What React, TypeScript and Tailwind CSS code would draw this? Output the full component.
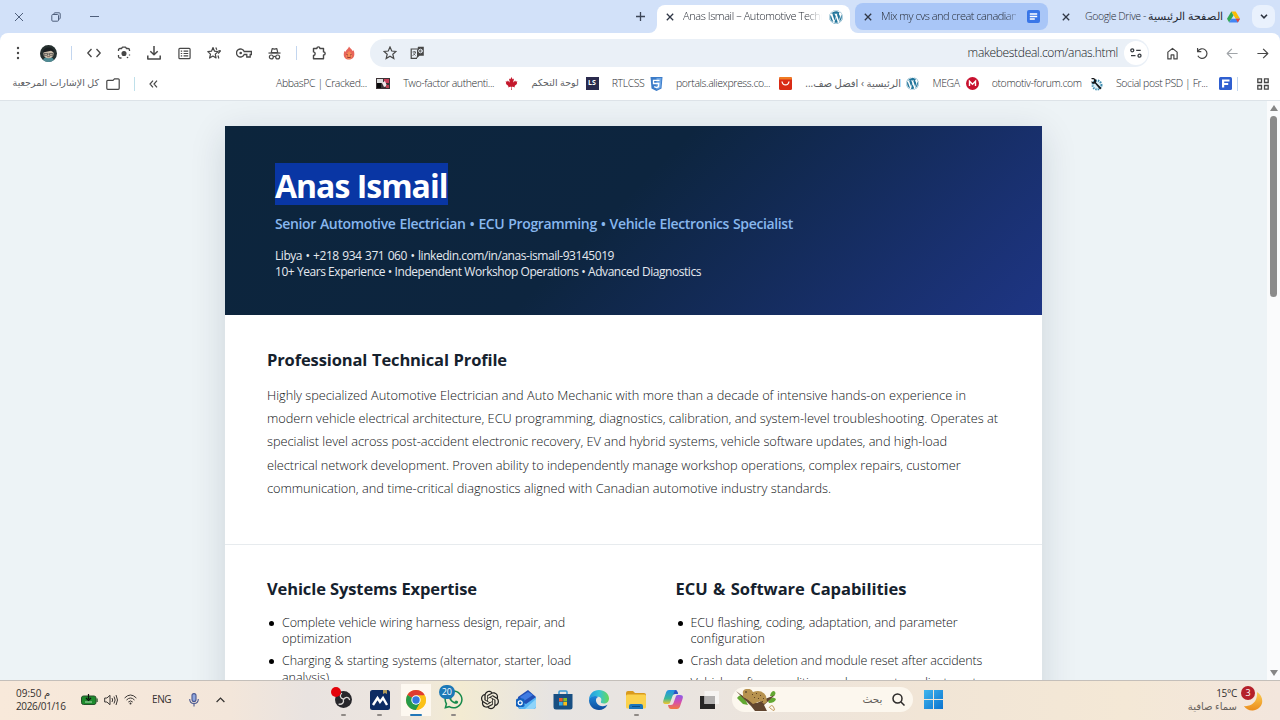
import type { ReactNode } from "react";
import { FaCanadianMapleLeaf, FaWhatsapp, FaWordpress } from "react-icons/fa";
import { RiOpenaiFill } from "react-icons/ri";

const Line = ({ className, children }: { className: string; children: ReactNode }) => (
  <span className={`block whitespace-nowrap [text-align-last:justify] ${className}`}>{children}</span>
);

const Close = ({ className = "" }: { className?: string }) => (
  <svg className={className} width="8" height="8" viewBox="0 0 8 8" fill="none" stroke="#303746" strokeWidth="1.3">
    <path d="M.8.8l6.4 6.4M7.2.8L.8 7.2" />
  </svg>
);

const Drive = () => (
  <svg width="13" height="12" viewBox="0 0 24 22">
    <path d="M8 1h8l8 13h-8z" fill="#fbbc04" />
    <path d="M8 1l4 7-8 13-4-7z" fill="#34a853" />
    <path d="M4 21l4-7h16l-4 7z" fill="#4285f4" />
    <path d="M16 14h8l-4 7z" fill="#ea4335" />
  </svg>
);

function TabStrip() {
  return (
    <div className="flex h-[33px] items-stretch bg-[#d2e1f9] text-[11px] text-[#262b34]">
      <div className="flex w-[631px] items-center pl-[14px]">
        <svg width="10" height="10" viewBox="0 0 10 10" fill="none" stroke="#4f5f7c" strokeWidth="1">
          <path d="M1 1l8 8M9 1L1 9" />
        </svg>
        <svg className="ml-[27px]" width="10" height="10" viewBox="0 0 10 10" fill="none" stroke="#4f5f7c" strokeWidth="1">
          <rect x=".8" y="2.5" width="6.7" height="6.7" rx="1" />
          <path d="M3 2.3V1.6c0-.5.3-.8.8-.8h4.4c.6 0 1 .4 1 1v4.4c0 .5-.3.8-.8.8h-.7" />
        </svg>
        <span className="ml-[29px] h-px w-[9px] bg-[#4f5f7c]" />
      </div>
      <div className="flex w-[18px] items-center justify-center">
        <svg width="9" height="9" viewBox="0 0 9 9" stroke="#3d4657" strokeWidth="1.3">
          <path d="M4.5 0v9M0 4.5h9" />
        </svg>
      </div>
      <div className="flex w-2 bg-white"><span className="h-full w-full rounded-br-lg bg-[#d2e1f9]" /></div>
      <div className="flex flex-1 bg-white">
        <div className="flex w-[193px] bg-[#d2e1f9]">
          <div className="mt-[5px] flex flex-1 items-center rounded-t-lg bg-white pb-[5px] pl-[9px]">
            <Close />
            <div className="ml-[9px] [mask-image:linear-gradient(to_right,black_88%,transparent_100%)]">
              <Line className="w-[139px] font-light tracking-[-0.42px]">Anas Ismail – Automotive Techn</Line>
            </div>
            <FaWordpress className="ml-[7px]" size={14} color="#21759b" />
          </div>
        </div>
        <div className="flex flex-1 items-center rounded-bl-lg bg-[#d2e1f9] pl-[5px]">
          <div className="flex h-[27px] w-[193px] items-center rounded-lg bg-[#a9c6f7] pl-[9px]">
            <Close />
            <div className="ml-[9px] [mask-image:linear-gradient(to_right,black_92%,transparent_104%)]">
              <Line className="w-[135px] font-light tracking-[-0.5px]">Mix my cvs and creat canadian</Line>
            </div>
            <svg className="ml-[11px]" width="13" height="13" viewBox="0 0 13 13">
              <rect width="13" height="13" rx="2" fill="#3976e8" />
              <path d="M2.8 4h7.4M2.8 6.5h7.4M2.8 9h5" stroke="#fff" strokeWidth="1.3" />
            </svg>
          </div>
          <Close className="ml-[14px]" />
          <Line className="ml-[15px] w-[134px] text-[10.5px] font-light tracking-[-0.42px]">
            Google Drive - الصفحة الرئيسية
          </Line>
          <span className="ml-[8px]"><Drive /></span>
          <span className="ml-3 flex size-[23px] items-center justify-center rounded-lg bg-[#e9f1fd]">
            <svg width="8" height="5" viewBox="0 0 8 5" fill="none" stroke="#2c333f" strokeWidth="1.6"><path d="M1 .8l3 3 3-3" /></svg>
          </span>
        </div>
      </div>
    </div>
  );
}

const Cell = ({ children }: { children: ReactNode }) => (
  <span className="flex w-[30px] shrink-0 items-center justify-center">{children}</span>
);

const Glyph = ({ children, size = 14, color = "#474747" }: { children: ReactNode; size?: number; color?: string }) => (
  <svg width={size} height={size} viewBox="0 0 14 14" fill="none" stroke={color} strokeWidth="1.3" strokeLinejoin="round">
    {children}
  </svg>
);

const Star = () => <path d="M7 1l1.75 4 4.25.4-3.2 2.8 1 4.3L7 10.2l-3.8 2.3 1-4.3L1 5.4 5.25 5z" strokeWidth="1.2" strokeLinejoin="miter" />;

function Toolbar() {
  return (
    <div className="bg-[#d2e1f9]">
      <div className="flex h-[38px] items-center rounded-t-lg bg-white pt-[2px] pl-[3px]">
        <Cell>
          <Glyph><g fill="#474747" stroke="none"><circle cx="7" cy="2" r="1.2" /><circle cx="7" cy="7" r="1.2" /><circle cx="7" cy="12" r="1.2" /></g></Glyph>
        </Cell>
        <Cell>
          <svg width="17" height="17" viewBox="0 0 17 17">
            <circle cx="8.5" cy="8.5" r="8.5" fill="#26302f" />
            <path d="M3 15c1-2.5 3-3 5.5-3s4.5.5 5.5 3a8.5 8.5 0 0 1-11 0z" fill="#4f8b94" />
            <ellipse cx="8.5" cy="8.7" rx="5.2" ry="4.6" fill="#c9bba8" />
            <path d="M3 7.5C3.2 3.5 6 2.4 8.8 2.4s5.2 1.6 5.2 5L11 5.8z" fill="#191d20" />
            <path d="M4 8.5h3.5v1.8H4zM9.5 8.5H13v1.8H9.5zM7.5 9h2" fill="none" stroke="#4c4a48" strokeWidth=".7" />
            <path d="M7 11.6h3" stroke="#7b5e50" strokeWidth=".8" />
          </svg>
        </Cell>
        <span className="flex w-4 justify-center"><span className="h-[14px] w-px bg-[#c3d6ef]" /></span>
        <Cell><Glyph><path d="M4.5 3L.8 7l3.7 4M9.5 3l3.7 4-3.7 4" /></Glyph></Cell>
        <Cell>
          <Glyph>
            <path d="M1.5 5V4c0-1 .5-1.5 1.5-1.5h1.5l1-1.3h3l1 1.3H11c1 0 1.5.5 1.5 1.5v1M1.5 9v1.5c0 1 .5 1.5 1.5 1.5h1.5M12.5 8.5v1" />
            <circle cx="7" cy="7.5" r="1.9" fill="#474747" /><circle cx="10.5" cy="11.5" r=".8" fill="#474747" stroke="none" />
          </Glyph>
        </Cell>
        <Cell><Glyph><path d="M7 0v8.5M3.3 5.2L7 8.8l3.7-3.6M.8 9.5v3.4h12.4V9.5" strokeWidth="1.5" /></Glyph></Cell>
        <Cell>
          <Glyph size={13}>
            <rect x="1" y="1.5" width="12" height="11" rx="1" />
            <path d="M3 4.5h1.5M6 4.5h5M3 7h1.5M6 7h5M3 9.5h1.5M6 9.5h5" strokeWidth="1.2" />
          </Glyph>
        </Cell>
        <Cell>
          <Glyph>
            <path d="M6 1.5l1.5 3.7 3.6.4-2.8 2.5.8 3.9-3.2-2-3.3 2 .9-3.9L.8 5.6l3.7-.4z" strokeWidth="1.2" />
            <path d="M8.8 1.5l1 2.2M11.5 4.5l2 .3-2.3 2.7M11 9.5l.8 3" strokeWidth="1.2" />
          </Glyph>
        </Cell>
        <Cell>
          <svg width="16" height="10" viewBox="0 0 16 10" fill="none" stroke="#474747" strokeWidth="1.3">
            <path d="M8.2 3.5A4 4 0 1 0 8.2 6.5H10.8V9h3.4V6.5h1.2v-3z" /><circle cx="4.7" cy="5" r="1.3" fill="#474747" stroke="none" />
          </svg>
        </Cell>
        <Cell>
          <Glyph size={13}>
            <path d="M3.5 6l1-4.3 2.5.6 2.5-.6 1 4.3z" /><path d="M.5 6.5h13" />
            <circle cx="3.6" cy="10.7" r="2.1" /><circle cx="10.4" cy="10.7" r="2.1" /><path d="M5.7 10.5q1.3-.8 2.6 0" />
          </Glyph>
        </Cell>
        <span className="flex w-[15px] justify-center"><span className="h-[14px] w-px bg-[#c3d6ef]" /></span>
        <Cell>
          <Glyph>
            <path d="M1.5 2.5h3.4c0-2.2 3-2.2 3 0h3.6v3.4c2.2 0 2.2 3.1 0 3.1v3.7h-10V9.5c2.2-.3 2.2-3.3 0-3.6z" strokeWidth="1.4" />
          </Glyph>
        </Cell>
        <Cell>
          <svg width="12" height="14" viewBox="0 0 12 14">
            <path d="M6 .5C7 2.5 9 3 9.5 5l1-.7C12.5 8.5 11 13.5 6 13.5S-.3 9 1.5 5l1.2.8C3 3.5 5.5 3 6 .5z" fill="#e8655a" />
            <path d="M6 5c2 2 3 3 3 5s-1.5 3-3 3-3-1-3-3 2-3 3-5z" fill="#f58b55" />
            <path d="M3.5 8.5l1.5.6M8.5 8.5L7 9.1M4 11q2 1.3 4 0" stroke="#8f2d36" fill="none" strokeWidth=".9" />
          </svg>
        </Cell>
        <div className="ml-[6px] flex h-7 w-[779px] items-center rounded-full bg-[#eaf0f7] pl-[13px]">
          <Glyph><Star /></Glyph>
          <svg className="ml-[13px]" width="15" height="14" viewBox="0 0 14 14" fill="none">
            <path d="M7 3H.7v9.3h5.8" stroke="#474747" strokeWidth="1.2" />
            <path d="M6.5 4.5L7.5.7h5.8v9H9L5.5 13l1-3z" fill="#474747" />
            <path d="M2 6h3.5M3.7 5v1M5 6c0 2-2 3-3 3.5M3 7.5l2 2" stroke="#474747" strokeWidth=".8" />
            <circle cx="10" cy="5" r="1.8" stroke="#eaf0f7" strokeWidth="1" /><path d="M10 5h2" stroke="#eaf0f7" strokeWidth="1" />
          </svg>
          <span className="mr-[6px] ml-auto text-[12px] font-light tracking-[-0.31px] whitespace-nowrap text-[#15181c]">makebestdeal.com/anas.html</span>
          <span className="mr-[1px] flex size-6 items-center justify-center rounded-full bg-white">
            <svg width="12" height="10" viewBox="0 0 12 10" fill="none" stroke="#34383e" strokeWidth="1.3">
              <circle cx="2.3" cy="2.3" r="1.5" /><path d="M6.2 2.3h4.5M1 7.7h4.5" /><circle cx="9.5" cy="7.7" r="1.5" />
            </svg>
          </span>
        </div>
        <span className="w-[8px]" />
        <Cell><Glyph size={13}><path d="M2 5.5L7 1.5l5 4v7.3H8.5V8.5h-3v4.3H2z" /></Glyph></Cell>
        <Cell><Glyph size={13}><path d="M1.7 1v4h4M2 4.7A5.2 5.2 0 1 1 2 9.5" /></Glyph></Cell>
        <Cell><Glyph color="#a1a5a9" size={13}><path d="M12.5 7h-11M6.3 2L1.3 7l5 5" /></Glyph></Cell>
        <Cell><Glyph size={13}><path d="M1.5 7h11M7.7 2l5 5-5 5" /></Glyph></Cell>
      </div>
    </div>
  );
}

const Mark = ({ text, width, children }: { text: string; width: string; children: ReactNode }) => (
  <div className={`flex items-center justify-between ${width}`}>
    <span className="whitespace-nowrap">{text}</span>
    {children}
  </div>
);

function Bookmarks() {
  return (
    <div className="flex h-[30px] items-center border-b border-[#dde3e8] bg-white pb-[4px] text-[10.5px] font-light tracking-[-0.4px] text-[#2a2d31]">
      <div className="ml-[10px] flex w-[89px] justify-end">
        <span dir="rtl" className="text-[9.5px] font-normal tracking-normal whitespace-nowrap text-[#5b5e63]">كل الإشارات المرجعية</span>
      </div>
      <svg className="ml-[7px]" width="14" height="12" viewBox="0 0 14 12" fill="none" stroke="#474747" strokeWidth="1.2">
        <path d="M.8 3.3v7q0 1 1 1h10.4q1 0 1-1V1.800q0-1-1-1H8.500L7 2.300H1.800q-1 0-1 1z" />
      </svg>
      <span className="ml-[14px] h-[14px] w-px bg-[#bfe0ea]" />
      <svg className="ml-[14px]" width="9" height="8" viewBox="0 0 9 8" fill="none" stroke="#474747" strokeWidth="1.2">
        <path d="M4 .7L1 4l3 3.3M8 .7L5 4l3 3.3" />
      </svg>
      <div className="ml-[118px] flex w-[956px] shrink-0 items-center justify-between">
        <Mark text="AbbasPC | Cracked..." width="w-[114px]">
          <svg width="14" height="11" viewBox="0 0 14 11">
            <rect width="14" height="11" fill="#3d3336" /><path d="M1 1h6v4H1z" fill="#ddd" /><path d="M1 5h4v5H1z" fill="#0a0a0a" />
            <path d="M8 1h5v4H8z" fill="#c43b55" /><path d="M6 5l3-2 2 5-3 1z" fill="#f2e8ea" /><path d="M10 7h3v3h-3z" fill="#b7404f" />
          </svg>
        </Mark>
        <Mark text="Two-factor authenti..." width="w-[115px]"><FaCanadianMapleLeaf size={13} color="#c4182c" /></Mark>
        <Mark text="لوحة التحكم" width="w-[67px] text-[9.5px] font-normal tracking-normal text-[#5b5e63]">
          <span className="flex h-[13px] w-[13px] items-center justify-center bg-[#2a2a4d] text-[7px] font-bold text-white">LS</span>
        </Mark>
        <Mark text="RTLCSS" width="w-[51px]">
          <svg width="13" height="14" viewBox="0 0 13 14">
            <path d="M.5 0h12l-1 11.5-5 2.5-5-2.5z" fill="#3b7bc8" /><path d="M6.5 1h5l-.8 9.8-4.2 2z" fill="#6ba4e4" />
            <path d="M9.5 3.3h-6v3.2h5.3L8.5 9.7l-2 .8-2.3-.8" fill="none" stroke="#fff" strokeWidth="1.3" />
          </svg>
        </Mark>
        <Mark text="portals.aliexpress.co..." width="w-[116px]">
          <svg width="13" height="13" viewBox="0 0 13 13">
            <rect width="13" height="13" rx="1.5" fill="#d92b16" /><path d="M0 1.5Q0 0 1.5 0h10Q13 0 13 1.5V2.5H0z" fill="#ef7b22" />
            <path d="M3 4.5c.8 4.5 6.2 4.5 7 0" stroke="#fff" fill="none" strokeWidth="1.3" />
          </svg>
        </Mark>
        <Mark text="الرئيسية › افضل صف..." width="w-[114px] text-[10px] font-normal tracking-normal text-[#5b5e63] [&>span]:[direction:rtl]"><FaWordpress size={13} color="#21759b" /></Mark>
        <Mark text="MEGA" width="w-[46px]">
          <svg width="13" height="13" viewBox="0 0 13 13"><circle cx="6.5" cy="6.5" r="6.5" fill="#c8102e" /><path d="M3.5 9V4.3l3 3 3-3V9" stroke="#fff" fill="none" strokeWidth="1.4" /></svg>
        </Mark>
        <Mark text="otomotiv-forum.com" width="w-[111px]">
          <svg width="14" height="14" viewBox="0 0 14 14">
            <circle cx="8" cy="8" r="4.5" fill="#d9eef7" stroke="#3f8db0" strokeWidth="2" strokeDasharray="1.4 1" />
            <path d="M2 2l3 .5L5 5l-3-.5C3 7 5 7 6 6.5l5 6 1.5-1.5L7 5.500C8 3 6 .5 3 1z" fill="#15181c" />
          </svg>
        </Mark>
        <Mark text="Social post PSD | Fr..." width="w-[116px]">
          <svg width="13" height="13" viewBox="0 0 13 13"><rect width="13" height="13" rx="1.5" fill="#2f5fd0" /><path d="M3 10.500V2.500h7.500v2H5.200v1.400h4v2h-4v2.600z" fill="#fff" /></svg>
        </Mark>
      </div>
      <span className="ml-[5px] h-[14px] w-px shrink-0 bg-[#c3d6ef]" />
      <svg className="ml-[19px] shrink-0" width="12" height="12" viewBox="0 0 12 12" fill="none" stroke="#474747" strokeWidth="1.3">
        <path d="M.8.8h3.7v3.7H.8zM7.500.8h3.7v3.7H7.500zM.8 7.500h3.7v3.7H.8zM7.500 7.500h3.7v3.7H7.500z" />
      </svg>
    </div>
  );
}

const Bullet = ({ children }: { children: ReactNode }) => (
  <li className="flex gap-2">
    <span className="mt-[6px] ml-[2px] size-[5px] shrink-0 rounded-full bg-black" />
    <div>{children}</div>
  </li>
);

function Resume() {
  return (
    <article className="h-[640px] w-[817px] bg-white shadow-[0_8px_34px_rgba(15,35,55,0.14)]">
      <header className="h-[189px] bg-[linear-gradient(135deg,#0c253c_0%,#0d253f_47%,#1e3584_100%)] pt-[37px] pl-[50px]">
        <h1 className="h-[42px] w-[173px] bg-[#0936a4] text-[32px] leading-[45px] font-bold text-white">
          <Line className="w-[172px] tracking-[-1px]">Anas Ismail</Line>
        </h1>
        <Line className="mt-[9px] w-[518px] text-[14px] leading-5 font-semibold tracking-[-0.36px] text-[#88b7ee]">
          Senior Automotive Electrician • ECU Programming • Vehicle Electronics Specialist
        </Line>
        <div className="mt-[14px] text-[12px] leading-[15.5px] text-[#e5e9ef]">
          <Line className="w-[339px] tracking-[-0.45px]">Libya • +218 934 371 060 • linkedin.com/in/anas-ismail-93145019</Line>
          <Line className="w-[426px] tracking-[-0.45px]">10+ Years Experience • Independent Workshop Operations • Advanced Diagnostics</Line>
        </div>
      </header>
      <section className="h-[230px] border-b border-[#e7ebee] pt-[33px] pl-[42px]">
        <h2 className="text-[16.5px] leading-6 font-bold text-[#15212d]">
          <Line className="w-[240px] tracking-[-0.12px]">Professional Technical Profile</Line>
        </h2>
        <p className="mt-3 text-[12.8px] leading-[23.2px] font-light tracking-[-0.04px] text-[#101316]">
          <Line className="w-[699px]">Highly specialized Automotive Electrician and Auto Mechanic with more than a decade of intensive hands-on experience in</Line>
          <Line className="w-[731px]">modern vehicle electrical architecture, ECU programming, diagnostics, calibration, and system-level troubleshooting. Operates at</Line>
          <Line className="w-[680px]">specialist level across post-accident electronic recovery, EV and hybrid systems, vehicle software updates, and high-load</Line>
          <Line className="w-[692px]">electrical network development. Proven ability to independently manage workshop operations, complex repairs, customer</Line>
          <Line className="w-[564px]">communication, and time-critical diagnostics aligned with Canadian automotive industry standards.</Line>
        </p>
      </section>
      <div className="grid grid-cols-2 pt-8 pl-[42px]">
        <section className="w-[408px]">
          <h2 className="text-[16.5px] leading-6 font-bold text-[#15212d]">
            <Line className="w-[210px] tracking-[-0.12px]">Vehicle Systems Expertise</Line>
          </h2>
          <ul className="mt-[13.5px] flex flex-col gap-[5.5px] text-[12.5px] leading-[16.5px] font-light tracking-[-0.12px] text-[#101316]">
            <Bullet>
              <Line className="w-[283px]">Complete vehicle wiring harness design, repair, and</Line>
              <span className="block tracking-normal">optimization</span>
            </Bullet>
            <Bullet>
              <Line className="w-[289px]">Charging &amp; starting systems (alternator, starter, load</Line>
              <span className="block tracking-normal">analysis)</span>
            </Bullet>
          </ul>
        </section>
        <section className="ml-[21px]">
          <h2 className="text-[16.5px] leading-6 font-bold text-[#15212d]">
            <Line className="w-[231px] tracking-[-0.02px]">ECU &amp; Software Capabilities</Line>
          </h2>
          <ul className="mt-[13.5px] flex flex-col gap-[5.5px] text-[12.5px] leading-[16.5px] font-light tracking-[-0.12px] text-[#101316]">
            <Bullet>
              <Line className="w-[267px]">ECU flashing, coding, adaptation, and parameter</Line>
              <span className="block tracking-normal">configuration</span>
            </Bullet>
            <Bullet><Line className="w-[291px]">Crash data deletion and module reset after accidents</Line></Bullet>
            <Bullet><Line className="w-[286px]">Vehicle software editing and parameter adjustment</Line></Bullet>
          </ul>
        </section>
      </div>
    </article>
  );
}

const TaskIcon = ({ children, dot, active }: { children: ReactNode; dot?: boolean; active?: boolean }) => (
  <div className={`relative flex h-8 w-[36.6px] items-center justify-center rounded ${active ? "bg-[linear-gradient(to_right,transparent_3px,#fdf8f0_3px,#fdf8f0_33px,transparent_33px)]" : ""}`}>
    {children}
    {dot && <span className="absolute bottom-0 h-[2px] w-[5px] rounded-full bg-[#8f8a86]" />}
    {active && <span className="absolute bottom-0 h-[2px] w-3 rounded-full bg-[#2277b8]" />}
  </div>
);

function Taskbar() {
  return (
    <footer className="flex h-10 shrink-0 items-center border-t border-[#c4bfba] bg-[linear-gradient(to_right,#f8e9da_0%,#f3e6da_18%,#e9e3e0_24%,#ece5df_31%,#f3ebd2_36%,#e7e4e2_43%,#e9e4e0_52%,#f1e5d6_72%,#f4e8d6_88%,#f3e6dd_100%)] pb-[2px] text-[#33302e]">
      <div className="ml-[15px] w-[53px] text-[10px] leading-[13px] tracking-[-0.35px] whitespace-nowrap">
        <div className="pl-[1px]">م 09:50</div>
        <div className="pl-[1px]">2026/01/16</div>
      </div>
      <svg className="ml-[13px]" width="17" height="11" viewBox="0 0 17 11">
        <rect x=".5" y="2" width="14.5" height="8.5" rx="2" fill="#1c8b2c" stroke="#26502b" /><path d="M15.5 4.5h1.2V8h-1.200z" fill="#26502b" />
        <path d="M7.5 0v5M5 4l2.5 2.5L10 4" stroke="#111" fill="none" strokeWidth="1.2" /><path d="M4 8h7" stroke="#d9f2da" strokeWidth=".8" />
      </svg>
      <svg className="ml-[6px]" width="14" height="12" viewBox="0 0 14 12" fill="none" stroke="#3b3735" strokeWidth="1">
        <path d="M.7 4v4h2.2L6 10.7V1.3L2.900 4zM8 4q1.300 2 0 4M10 2.500q2.300 3.500 0 7M12 1q3 5 0 10" />
      </svg>
      <svg className="ml-[6px]" width="13" height="11" viewBox="0 0 13 11" fill="none" stroke="#3b3735" strokeWidth="1">
        <path d="M.6 4q5.900-6 11.800 0M2.500 6q4-4 8 0M4.300 8q2.200-2.200 4.400 0" /><circle cx="6.5" cy="9.5" r="1" fill="#3b3735" stroke="none" />
      </svg>
      <span className="ml-[15px] w-[19px] text-[10px] tracking-[-0.4px]">ENG</span>
      <svg className="ml-[18px]" width="10" height="14" viewBox="0 0 10 14" fill="none" stroke="#4a5790" strokeWidth="1.1">
        <rect x="3" y=".6" width="4" height="8" rx="2" fill="#8fa6de" /><path d="M.7 6c0 6 8.600 6 8.600 0M5 10.500v3" />
      </svg>
      <svg className="ml-[17px]" width="9" height="6" viewBox="0 0 9 6" fill="none" stroke="#33302e" strokeWidth="1.2"><path d="M.6 5l3.900-4 3.900 4" /></svg>
      <div className="ml-[100px] flex shrink-0 items-center">
        <TaskIcon dot>
          <svg width="17" height="17" viewBox="0 0 17 17" fill="none">
            <circle cx="8.5" cy="8.5" r="8.5" fill="#28272b" />
            <path d="M8.5 8C5 7.500 4.500 4 6.500 2.500M8.800 8.300c1.600-3 5-2.300 5.700.2M8.300 8.600c1 3-1.300 5.200-4.300 4.500" stroke="#d9d7d5" strokeWidth="1.3" strokeLinecap="round" />
          </svg>
          <span className="absolute top-[3px] left-[6px] size-[10px] rounded-full bg-[#e4020a]" />
        </TaskIcon>
        <TaskIcon dot>
          <svg width="20" height="20" viewBox="0 0 20 20"><rect width="20" height="20" rx="2.5" fill="#0c2b63" /><path d="M13 0h4v4l-2-1-2 1z" fill="#b09a5b" /><path d="M3 15l4.500-7L10 12l3-4 4 7" stroke="#fff" strokeWidth="2.4" fill="none" /></svg>
        </TaskIcon>
        <TaskIcon active>
          <svg width="20" height="20" viewBox="0 0 20 20">
            <circle cx="10" cy="10" r="10" fill="#fbc116" /><path d="M10 10L1.340 5A10 10 0 0 1 18.660 5z" fill="#df3b30" />
            <path d="M10 10L1.340 5A10 10 0 0 0 10 20l4.300-7.500z" fill="#269a4a" /><path d="M10 5.300h8.800A10 10 0 0 1 10 20l4.500-8z" fill="#fbc116" />
            <circle cx="10" cy="10" r="4.7" fill="#fff" /><circle cx="10" cy="10" r="3.7" fill="#3478df" />
          </svg>
        </TaskIcon>
        <TaskIcon dot>
          <FaWhatsapp size={21} color="#178a4c" />
          <span className="absolute top-[1px] left-[4px] flex h-[14px] w-[16px] items-center justify-center rounded-full bg-[#1c79b7] text-[9px] text-white">20</span>
        </TaskIcon>
        <TaskIcon><RiOpenaiFill size={22} color="#242321" /></TaskIcon>
        <TaskIcon>
          <svg width="20" height="19" viewBox="0 0 20 19">
            <path d="M2 7L12 0l8 7v9q0 3-3 3H5q-3 0-3-3z" fill="#2350b5" /><path d="M4 7l8-5 5 3-9 6z" fill="#3f7be2" />
            <path d="M2 10l8 4L20 7v9q0 3-3 3H5q-3 0-3-3z" fill="#58b6f4" /><path d="M9 19L20 9v7q0 3-3 3z" fill="#8fd4fa" /><rect x="0" y="8.5" width="8.5" height="8.5" rx="1.8" fill="#1261be" /><circle cx="4.2" cy="12.8" r="2" fill="none" stroke="#fff" strokeWidth="1.2" />
          </svg>
        </TaskIcon>
        <TaskIcon>
          <svg width="20" height="20" viewBox="0 0 20 20">
            <path d="M6 5V2q0-1 1-1h6q1 0 1 1v3" stroke="#3a9bd4" fill="none" strokeWidth="1.5" /><path d="M.5 4h19v13q0 2.500-2.500 2.500H3Q.5 19.500.5 17z" fill="#184f82" />
            <path d="M6 8h3.700v3.500H6z" fill="#ee5a2b" /><path d="M10.3 8H14v3.500h-3.700z" fill="#83bd2a" /><path d="M6 12h3.700v3.500H6z" fill="#35a9e5" /><path d="M10.3 12H14v3.500h-3.700z" fill="#fbbd19" />
          </svg>
        </TaskIcon>
        <TaskIcon>
          <svg width="20" height="20" viewBox="0 0 20 20">
            <defs>
              <linearGradient id="edgeTop"><stop stopColor="#2198dd" /><stop offset=".5" stopColor="#35c2d8" /><stop offset="1" stopColor="#65d957" /></linearGradient>
              <linearGradient id="edgeLow" x2="0" y2="1"><stop stopColor="#1b85d9" /><stop offset="1" stopColor="#0e4b9b" /></linearGradient>
            </defs>
            <path d="M0 10C0 4 4.500 0 10 0s10 4 10 8.500c0 3-2.300 5-5 5s-3.500-1-3-2 .8-3.500-1.500-4.500C6 5.300 1 7 0 10z" fill="url(#edgeTop)" />
            <path d="M0 10c1-4 7-5 9.500-3C7 7.500 6.500 10 7.500 12.500c1.500 3.500 7 5 11 2.300C16.500 18.500 13.500 20 10 20 4.500 20 0 16 0 10z" fill="url(#edgeLow)" />
          </svg>
        </TaskIcon>
        <TaskIcon dot>
          <svg width="20" height="18" viewBox="0 0 20 18"><path d="M0 2q0-2 2-2h5l2 2h9q2 0 2 2v4H0z" fill="#d99a1d" /><rect y="3.5" width="20" height="14" rx="1.5" fill="#fbd24d" /><path d="M3 18v-3q0-2 2-2h10q2 0 2 2v3z" fill="#1b76bd" /><path d="M6 15.500h8" stroke="#0c4e87" /></svg>
        </TaskIcon>
        <TaskIcon>
          <svg width="20" height="19" viewBox="0 0 20 19">
            <defs>
              <linearGradient id="coA" x2="0" y2="1"><stop stopColor="#2291e8" /><stop offset=".6" stopColor="#39b89a" /><stop offset="1" stopColor="#f5c52b" /></linearGradient>
              <linearGradient id="coB" x2="0" y2="1"><stop stopColor="#8a5cea" /><stop offset=".5" stopColor="#d44fb0" /><stop offset="1" stopColor="#f3783d" /></linearGradient>
            </defs>
            <path d="M6 0h6q2 0 2.500 2L15 4h-3q-2 0-2.500 2L7 13q-.5 1-2 1H3q-4 0-2.500-4l2.700-8Q4 0 6 0z" fill="url(#coA)" />
            <path d="M14 19H8q-2 0-2.500-2L5 15h3q2 0 2.500-2L13 6q.5-1 2-1h2q4 0 2.500 4l-2.700 8Q16 19 14 19z" fill="url(#coB)" />
            <path d="M12 0q2 0 2.500 2l.5 2h-3q-1.500 0-2 1z" fill="#2c52c4" />
          </svg>
        </TaskIcon>
        <TaskIcon>
          <svg width="19" height="18" viewBox="0 0 19 18"><path d="M0 5h15v13H0z" fill="#262525" /><path d="M4.500 0H19v13H4.500z" fill="#f6f4f2" /><path d="M4.500 5H15v8H4.500z" fill="#b3b1b0" /></svg>
        </TaskIcon>
      </div>
      <div className="ml-[4px] flex h-[25px] w-[181px] shrink-0 items-center rounded-full bg-[#fcf7ee]">
        <svg className="ml-[3px]" width="43" height="22" viewBox="0 0 43 22">
          <path d="M2 9q4-6 8 1l3 6-5-1zM33 12q4-6 8-2-1 4-7 4zM35 7q1-5 4-5 3 2 0 5z" fill="#62a832" />
          <path d="M1 2l7 7 8 8 4 5h12l-3-6 11-10-10 4-8 4-8-3-9-6z" fill="#61452f" />
          <path d="M8 5q-1-4 3-5 5-1 7 3 9-3 13 4l1 6-3 2-3-3-8 3-6-5-4-2z" fill="#b7924f" />
          <path d="M17 5l1 1M21 4l1 1M25 6l1 1M19 8l1 1M23 9l1 1M28 9l1 1M27 12l1 1" stroke="#604424" strokeWidth="1" />
          <circle cx="11" cy="3" r=".8" fill="#2b2018" /><path d="M34 19q3-5 5 0t-4 0" fill="none" stroke="#c19b5f" />
        </svg>
        <span dir="rtl" className="ml-auto text-[10.5px] text-[#605c58]">بحث</span>
        <svg className="mr-2 ml-[9px]" width="13" height="13" viewBox="0 0 13 13" fill="none" stroke="#2c2a29" strokeWidth="1.5"><circle cx="5.5" cy="5.5" r="4.5" /><path d="M9 9l3.500 3.500" /></svg>
      </div>
      <svg className="ml-[11px] shrink-0" width="19" height="19" viewBox="0 0 19 19">
        <defs><linearGradient id="win" x2="1" y2="1"><stop stopColor="#3fb5ee" /><stop offset="1" stopColor="#0b73cf" /></linearGradient></defs>
        <path d="M0 0h9v9H0zM10 0h9v9h-9zM0 10h9v9H0zM10 10h9v9h-9z" fill="url(#win)" />
      </svg>
      <div className="mr-[7px] ml-auto flex flex-col items-end text-[10px] leading-[13px] whitespace-nowrap">
        <span className="tracking-[-0.3px]">15°C</span>
        <span dir="rtl" className="text-[#68625d]">سماء صافية</span>
      </div>
      <div className="relative mr-[17px] h-[24px] w-[19px] shrink-0">
        <svg className="absolute top-1 left-0" width="19" height="19" viewBox="0 0 19 19">
          <defs><linearGradient id="moon" x2="0" y2="1"><stop stopColor="#fbcf56" /><stop offset="1" stopColor="#eb8c1b" /></linearGradient></defs>
          <path d="M13 0c8 5 7 17-4 18.500-4 .3-7-1.500-9-4.500C7 15 14 10 13 0z" fill="url(#moon)" />
        </svg>
        <span className="absolute -top-[2px] -left-[3px] flex size-[14px] items-center justify-center rounded-full bg-[#b5202a] text-[9px] text-white">3</span>
      </div>
    </footer>
  );
}

export default function App() {
  return (
    <div className="flex h-[720px] w-[1280px] flex-col overflow-hidden bg-white font-['Open_Sans','DejaVu_Sans',sans-serif]">
      <TabStrip />
      <Toolbar />
      <Bookmarks />
      <main className="flex min-h-0 flex-1 overflow-hidden bg-[#edf3f6]">
        <div className="flex-1 pt-[25px] pl-[225px]"><Resume /></div>
        <div className="flex w-[13px] flex-col items-center bg-[#fafbfc]">
          <svg className="mt-1" width="8" height="6" viewBox="0 0 8 6"><path d="M4 0l4 6H0z" fill="#868686" /></svg>
          <span className="mt-[5px] h-[181px] w-[7px] rounded-full bg-[#8b8b8b]" />
          <svg className="mt-auto mb-1" width="8" height="6" viewBox="0 0 8 6"><path d="M4 6l4-6H0z" fill="#868686" /></svg>
        </div>
      </main>
      <Taskbar />
    </div>
  );
}
